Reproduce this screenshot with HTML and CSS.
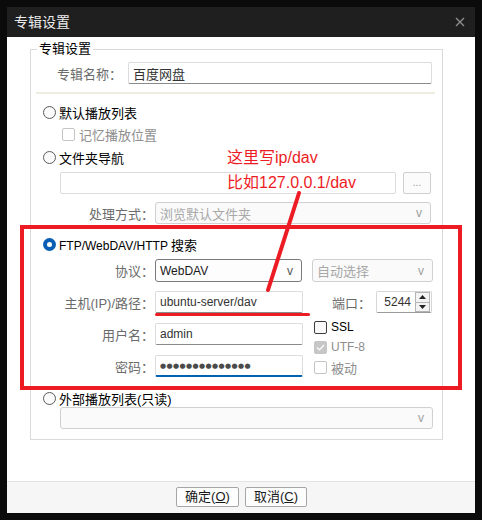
FILE: index.html
```html
<!DOCTYPE html>
<html lang="zh-CN">
<head>
<meta charset="utf-8">
<title>专辑设置</title>
<link rel="stylesheet" href="styles.css">
</head>
<body>
<div class="window">
  <div class="titlebar">
    <span class="title">专辑设置</span>
    <svg class="close" width="10" height="10" viewBox="0 0 10 10"><path d="M1 1 L9 9 M9 1 L1 9" stroke="#8c8c8c" stroke-width="1.4" fill="none"/></svg>
  </div>
  <div class="content">
    <div class="group">
      <span class="legend">专辑设置</span>
      <div class="row name-row">
        <span class="label name-label">专辑名称：</span>
        <div class="field name-field">百度网盘</div>
      </div>
      <div class="sep"></div>
      <div class="row opt r-default"><span class="radio"></span><span>默认播放列表</span></div>
      <div class="row sub"><span class="check off"></span><span class="dim">记忆播放位置</span></div>
      <div class="row opt r-folder"><span class="radio"></span><span>文件夹导航</span></div>
      <div class="row folder-row">
        <div class="field folder-field"></div>
        <div class="btn-more">...</div>
      </div>
      <div class="row form-row r-mode">
        <span class="label">处理方式：</span>
        <div class="combo disabled mode-combo"><span>浏览默认文件夹</span><span class="caret">v</span></div>
      </div>
      <div class="row opt r-ftp"><span class="radio on"></span><span><span class="lat">FTP/WebDAV/HTTP </span>搜索</span></div>
      <div class="row form-row r-proto">
        <span class="label">协议：</span>
        <div class="combo proto-combo"><span class="lat">WebDAV</span><span class="caret">v</span></div>
        <div class="combo disabled auto-combo"><span>自动选择</span><span class="caret">v</span></div>
      </div>
      <div class="ftp-grid">
        <div class="ftp-left">
          <div class="row form-row">
            <span class="label">主机(IP)/路径：</span>
            <div class="field ftp-field"><span class="lat">ubuntu-server/dav</span></div>
          </div>
          <div class="row form-row">
            <span class="label">用户名：</span>
            <div class="field ftp-field"><span class="lat">admin</span></div>
          </div>
          <div class="row form-row">
            <span class="label">密码：</span>
            <div class="field ftp-field focused"><span class="dots">●●●●●●●●●●●●●●</span></div>
          </div>
        </div>
        <div class="ftp-right">
          <div class="row port-row">
            <span class="label port-label">端口：</span>
            <div class="spin">
              <span class="spin-val lat">5244</span>
              <span class="spin-btns">
                <span class="spin-btn"><svg width="7" height="4" viewBox="0 0 7 4"><path d="M0 4 L3.5 0 L7 4Z" fill="#222"/></svg></span>
                <span class="spin-btn"><svg width="7" height="4" viewBox="0 0 7 4"><path d="M0 0 L3.5 4 L7 0Z" fill="#222"/></svg></span>
              </span>
            </div>
          </div>
          <div class="checks">
            <div class="row chk-row"><span class="check dark"></span><span class="lat">SSL</span></div>
            <div class="row chk-row"><span class="check checked-dis"><svg width="9" height="7" viewBox="0 0 9 7"><path d="M1 3.5 L3.5 6 L8 1" stroke="#fff" stroke-width="1.2" fill="none"/></svg></span><span class="dim lat">UTF-8</span></div>
            <div class="row chk-row"><span class="check off"></span><span class="dim">被动</span></div>
          </div>
        </div>
      </div>
      <div class="row opt r-ext"><span class="radio"></span><span>外部播放列表(只读)</span></div>
      <div class="row ext-row">
        <div class="combo disabled ext-combo"><span></span><span class="caret">v</span></div>
      </div>
    </div>
  </div>
  <div class="footer">
    <button class="btn ok">确定(<u>O</u>)</button>
    <button class="btn cancel">取消(<u>C</u>)</button>
  </div>

  <div class="redbox"></div>
  <div class="note">这里写ip/dav<br>比如127.0.0.1/dav</div>
  <svg class="arrow" width="468" height="506" viewBox="0 0 468 506"><line x1="292" y1="186" x2="261" y2="283" stroke="#ed1c24" stroke-width="4" stroke-linecap="round"/></svg>
  <div class="underline"></div>
</div>
</body>
</html>
```
FILE: styles.css
```css
* { box-sizing: border-box; }
html, body { margin: 0; padding: 0; }
body {
  background: #0b0b0b;
  width: 482px;
  height: 520px;
  overflow: hidden;
  font-family: "Liberation Sans", "Noto Sans CJK SC", sans-serif;
  font-size: 13px;
  color: #1a1a1a;
}
.lat { font-size: 12px; }
.window {
  position: relative;
  margin: 7px 0 0 7px;
  width: 468px;
  height: 506px;
  background: #fff;
  display: flex;
  flex-direction: column;
}
.titlebar {
  height: 30px;
  flex: none;
  background: #1f1f1f;
  display: flex;
  align-items: center;
  justify-content: space-between;
  padding: 0 10px 0 7px;
}
.title {
  color: #ececec;
  font-size: 14px;
  line-height: 16px;
}
.close { display: block; }
.content {
  flex: 1;
  padding: 12px 32px 0 23px;
}
.group {
  position: relative;
  border: 1px solid #dadada;
  height: 391px;
  display: flex;
  flex-direction: column;
}
.legend {
  position: absolute;
  left: 6px;
  top: -9px;
  padding: 0 2px;
  background: #fff;
  font-size: 13px;
  line-height: 16px;
  color: #000;
}
.row {
  display: flex;
  align-items: center;
  flex: none;
}
.label {
  color: #6b6b6b;
  text-align: right;
  white-space: nowrap;
}
.dim { color: #8e8e8e; }
.field {
  height: 22px;
  border: 1px solid #dcdcdc;
  border-bottom-color: #8a8a8a;
  border-radius: 2px;
  background: #fff;
  padding: 0 4px;
  display: flex;
  align-items: center;
  color: #333;
  white-space: nowrap;
  overflow: hidden;
}
.field.focused {
  border-bottom: 2px solid #0063b1;
  padding-top: 1px;
}
.dots {
  font-family: "DejaVu Sans", sans-serif;
  font-size: 7px;
  letter-spacing: 0.4px;
  color: #4a4a4a;
}
.name-row { height: 22px; margin-top: 12px; padding-left: 26px; }
.name-label { width: 71px; text-align: left; }
.name-field { width: 304px; }
.sep {
  flex: none;
  height: 2px;
  margin: 8px 0 0 5px;
  width: 399px;
  background: #efece0;
}
.opt { height: 16px; padding-left: 12px; color: #000; }
.r-default { margin-top: 10px; }
.r-folder { margin-top: 7px; }
.r-ftp { margin-top: 12px; }
.r-ext { margin-top: 13px; }
.radio {
  width: 13px;
  height: 13px;
  border: 1px solid #5a5a5a;
  border-radius: 50%;
  background: #fafafa;
  margin-right: 3px;
  flex: none;
  position: relative;
}
.radio.on {
  border: none;
  background: #0a5fb4;
}
.radio.on::after {
  content: "";
  position: absolute;
  left: 4px;
  top: 4px;
  width: 5px;
  height: 5px;
  border-radius: 50%;
  background: #fff;
}
.sub { height: 16px; margin-top: 6px; padding-left: 31px; }
.check {
  width: 13px;
  height: 13px;
  border: 1px solid #c4c4c4;
  border-radius: 2px;
  background: #fff;
  margin-right: 4px;
  flex: none;
  display: flex;
  align-items: center;
  justify-content: center;
}
.check.dark { border-color: #3c3c3c; background: #f9f9f9; }
.check.checked-dis { border-color: #c6c6c6; background: #c6c6c6; }
.folder-row { height: 22px; margin-top: 7px; padding-left: 29px; }
.folder-field { width: 336px; border-bottom-color: #dcdcdc; }
.btn-more {
  width: 28px;
  height: 22px;
  margin-left: 7px;
  border: 1px solid #cfcfcf;
  border-radius: 2px;
  background: #fbfbfb;
  color: #999;
  font-size: 10px;
  display: flex;
  align-items: center;
  justify-content: center;
  padding-bottom: 2px;
}
.form-row .label { width: 123px; margin-right: 1px; }
.r-mode { height: 22px; margin-top: 8px; }
.r-proto { height: 23px; margin-top: 7px; }
.combo {
  height: 100%;
  border: 1px solid #7a7a7a;
  border-radius: 3px;
  background: #fdfdfd;
  display: flex;
  align-items: center;
  justify-content: space-between;
  padding: 0 8px 0 4px;
  color: #1a1a1a;
  white-space: nowrap;
}
.combo.disabled {
  border-color: #d0d0d0;
  background: #fafafa;
  color: #a8a8a8;
}
.caret {
  font-size: 12px;
  color: #555;
}
.combo.disabled .caret { color: #a0a0a0; }
.mode-combo { width: 276px; }
.proto-combo { width: 147px; }
.auto-combo { width: 121px; margin-left: 10px; }
.ftp-grid {
  display: flex;
  margin-top: 9px;
  flex: none;
}
.ftp-left {
  display: flex;
  flex-direction: column;
  gap: 10px;
}
.ftp-left .row { height: 22px; }
.ftp-field { width: 148px; }
.ftp-right {
  margin-left: 9px;
  display: flex;
  flex-direction: column;
}
.port-row { height: 22px; }
.port-label { width: 44px; margin-left: 20px; text-align: left; }
.spin {
  width: 56px;
  height: 22px;
  border: 1px solid #d6d6d6;
  border-bottom-color: #9a9a9a;
  border-radius: 2px;
  display: flex;
  align-items: center;
  justify-content: flex-end;
  padding-right: 1px;
}
.spin-val { color: #333; margin-right: 4px; }
.spin-btns {
  display: flex;
  flex-direction: column;
  height: 20px;
  width: 15px;
}
.spin-btn {
  flex: 1;
  border: 1px solid #b4b4b4;
  background: #f3f3f3;
  display: flex;
  align-items: center;
  justify-content: center;
}
.spin-btn + .spin-btn { border-top: none; }
.checks {
  margin-top: 4px;
  padding-left: 2px;
}
.chk-row { height: 20px; color: #000; }
.ext-row { height: 22px; margin-top: 1px; padding-left: 29px; }
.ext-combo { width: 373px; }
.footer {
  height: 32px;
  flex: none;
  background: #f6f6f6;
  border-top: 1px solid #e3e3e3;
  display: flex;
  justify-content: center;
  gap: 6px;
  padding-top: 5px;
  padding-left: 1px;
}
.btn {
  height: 20px;
  border: 1px solid #a6a6a6;
  border-radius: 2px;
  background: #fdfdfd;
  font-family: inherit;
  font-size: 13px;
  color: #1a1a1a;
  padding: 0;
  line-height: 18px;
}
.btn.ok { width: 63px; }
.btn.cancel { width: 62px; }
.redbox {
  position: absolute;
  left: 13px;
  top: 218px;
  width: 442px;
  height: 165px;
  border: 4px solid #ed1c24;
}
.note {
  position: absolute;
  left: 220px;
  top: 138px;
  color: #ed1c24;
  font-size: 16px;
  line-height: 25px;
}
.arrow {
  position: absolute;
  left: 0;
  top: 0;
}
.underline {
  position: absolute;
  left: 148px;
  top: 306px;
  width: 155px;
  height: 3px;
  border-radius: 2px;
  background: #ed1c24;
}
```
